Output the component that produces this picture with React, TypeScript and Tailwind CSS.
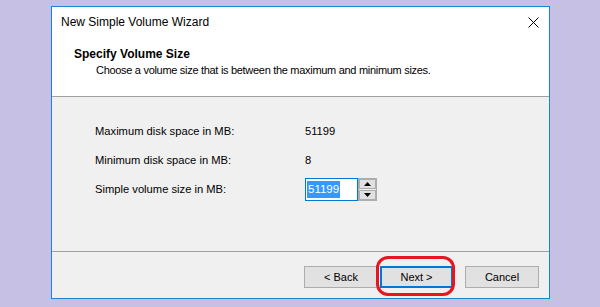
import React from 'react'

const font = { fontFamily: '"Liberation Sans", Arial, sans-serif' }

const SpinButton: React.FC<{ up?: boolean }> = ({ up }) => (
  <div className="flex h-[10px] w-[17px] items-center justify-center border border-[#adadad] bg-[#e1e1e1]">
    <svg width="7" height="4" viewBox="0 0 7 4">
      {up ? <polygon points="3.5,0 7,4 0,4" fill="#000" /> : <polygon points="0,0 7,0 3.5,4" fill="#000" />}
    </svg>
  </div>
)

export default function App() {
  return (
    <div className="h-[307px] w-[600px] overflow-hidden bg-[#c6c0e5] pl-[51px] pt-[6px] text-[11px] text-black" style={font}>
      <div className="flex h-[293px] w-[499px] flex-col border border-[#1883d7] bg-[#f0f0f0]">
        {/* title + header */}
        <div className="h-[90px] border-b border-[#a0a0a0] bg-white">
          <div className="flex h-[30px] items-center justify-between pl-[9px] pr-[9px]">
            <span className="text-[12px] leading-[16px]">New Simple Volume Wizard</span>
            <svg width="11" height="11" viewBox="0 0 11 11" className="mr-[1px]">
              <path d="M0.5 0.5L10.5 10.5M10.5 0.5L0.5 10.5" stroke="#000" strokeWidth="1" />
            </svg>
          </div>
          <div className="pt-[9px]">
            <div className="pl-[22px] text-[12px] font-bold leading-[16px]">Specify Volume Size</div>
            <div className="pl-[44px] leading-[16px] tracking-[-0.3px]">Choose a volume size that is between the maximum and minimum sizes.</div>
          </div>
        </div>

        {/* content */}
        <div className="h-[155px] border-b border-[#a0a0a0] pl-[43px] pt-[26px]">
          <div className="grid grid-cols-[210px_1fr] gap-y-[13px] text-[11.2px]">
            <div className="leading-[16px]">Maximum disk space in MB:</div>
            <div className="leading-[16px]">51199</div>
            <div className="leading-[16px]">Minimum disk space in MB:</div>
            <div className="leading-[16px]">8</div>
            <div className="leading-[16px]">Simple volume size in MB:</div>
            <div className="-mt-[3px] flex">
              <div className="flex h-[23px] w-[53px] items-center border border-[#0078d7] bg-white pl-[1px]">
                <span className="bg-[#3399ff] px-[1px] text-[11.5px] leading-[17px] text-white">51199</span>
              </div>
              <div className="flex h-[23px] w-[19px] flex-col justify-center gap-[1px] border border-[#adadad] bg-[#f0f0f0]">
                <SpinButton up />
                <SpinButton />
              </div>
            </div>
          </div>
        </div>

        {/* buttons */}
        <div className="flex justify-end pr-[10px] pt-[14px]">
          <button className="h-[22px] w-[74px] border border-[#adadad] bg-[#e1e1e1] leading-[16px]">&lt; Back</button>
          <div className="relative ml-[2px]">
            <button className="h-[22px] w-[73px] border-2 border-[#0078d7] bg-[#e1e1e1] leading-[16px]">Next &gt;</button>
            <div className="absolute left-[-4px] top-[-10px] h-[40px] w-[79px] rounded-[12px] border-[3px] border-[#e8141e]" />
          </div>
          <button className="ml-[12px] h-[22px] w-[74px] border border-[#adadad] bg-[#e1e1e1] leading-[16px]">Cancel</button>
        </div>
      </div>
    </div>
  )
}
